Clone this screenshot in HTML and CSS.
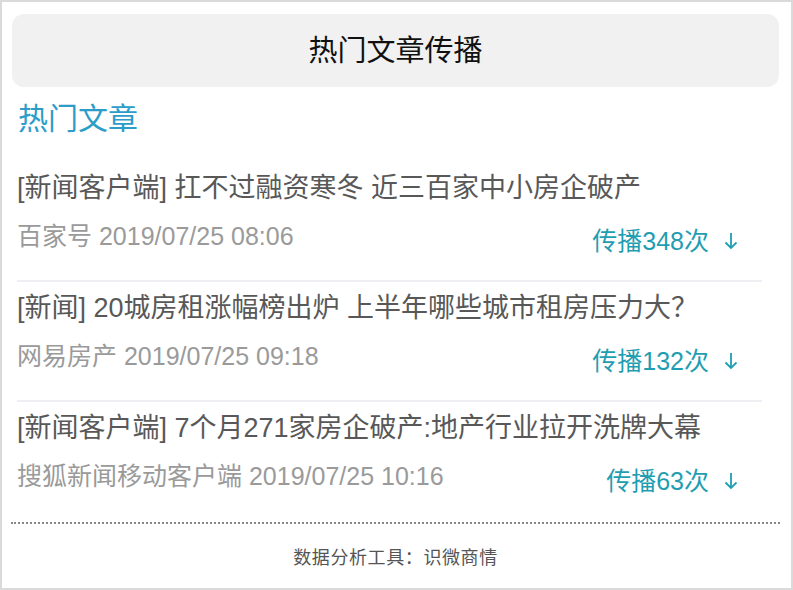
FILE: index.html
```html
<!DOCTYPE html>
<html lang="zh-CN">
<head>
  <meta charset="UTF-8">
  <title>热门文章传播</title>
  <link rel="stylesheet" href="styles.css">
</head>
<body>
  <div class="page">
    <div class="top-bar">热门文章传播</div>
    <h2 class="section-title">热门文章</h2>

    <ul class="article-list">
      <li class="article">
        <div class="article-title">[新闻客户端] 扛不过融资寒冬 近三百家中小房企破产</div>
        <div class="article-meta">
          <span class="source">百家号 2019/07/25 08:06</span>
          <span class="spread">传播348次
            <svg class="arrow" width="14" height="18" viewBox="0 0 14 18"><path d="M7 1V16M1.5 10.5L7 16L12.5 10.5" fill="none" stroke="currentColor" stroke-width="1.8"/></svg>
          </span>
        </div>
      </li>
      <li class="article">
        <div class="article-title">[新闻] 20城房租涨幅榜出炉 上半年哪些城市租房压力大？</div>
        <div class="article-meta">
          <span class="source">网易房产 2019/07/25 09:18</span>
          <span class="spread">传播132次
            <svg class="arrow" width="14" height="18" viewBox="0 0 14 18"><path d="M7 1V16M1.5 10.5L7 16L12.5 10.5" fill="none" stroke="currentColor" stroke-width="1.8"/></svg>
          </span>
        </div>
      </li>
      <li class="article">
        <div class="article-title">[新闻客户端] 7个月271家房企破产:地产行业拉开洗牌大幕</div>
        <div class="article-meta">
          <span class="source">搜狐新闻移动客户端 2019/07/25 10:16</span>
          <span class="spread">传播63次
            <svg class="arrow" width="14" height="18" viewBox="0 0 14 18"><path d="M7 1V16M1.5 10.5L7 16L12.5 10.5" fill="none" stroke="currentColor" stroke-width="1.8"/></svg>
          </span>
        </div>
      </li>
    </ul>

    <div class="footer">数据分析工具：识微商情</div>
  </div>
</body>
</html>
```

FILE: styles.css
```css
body {
  margin: 0;
  font-family: "Liberation Sans", "Noto Sans CJK SC", sans-serif;
  background: #fff;
}

.page {
  width: 793px;
  height: 590px;
  box-sizing: border-box;
  border: 2px solid #dadada;
  overflow: hidden;
}

.top-bar {
  margin: 12px 12px 0 10px;
  height: 73px;
  line-height: 69px;
  background: #f1f1f1;
  border-radius: 12px;
  text-align: center;
  font-size: 29px;
  font-family: "Noto Sans CJK SC", sans-serif;
  color: #111;
}

.section-title {
  margin: 9px 0 0 16px;
  font-size: 30px;
  line-height: 40px;
  font-weight: normal;
  font-family: "Noto Sans CJK SC", sans-serif;
  color: #2c9dc9;
}

.article-list {
  list-style: none;
  margin: 26px 29px 0 15px;
  padding: 0;
}

.article {
  padding: 11px 0 24px;
  border-bottom: 2px solid #eeeef3;
}

.article:last-child {
  border-bottom: none;
}

.article-title {
  font-size: 27px;
  line-height: 30px;
  color: #585858;
  white-space: nowrap;
}

.article-meta {
  display: flex;
  justify-content: space-between;
  align-items: flex-start;
  margin-top: 18px;
}

.source {
  font-size: 25px;
  line-height: 30px;
  color: #9a9a9a;
}

.spread {
  display: flex;
  align-items: center;
  margin-top: 5px;
  padding-right: 24px;
  font-size: 25px;
  line-height: 30px;
  color: #1f9eb2;
}

.arrow {
  margin-left: 15px;
}

.footer {
  margin: 2px 11px 0 9px;
  border-top: 2px dotted #888;
  padding-top: 20px;
  line-height: 24px;
  text-align: center;
  font-size: 18px;
  letter-spacing: 0.6px;
  font-family: "Noto Sans CJK SC", sans-serif;
  color: #555;
}
```
